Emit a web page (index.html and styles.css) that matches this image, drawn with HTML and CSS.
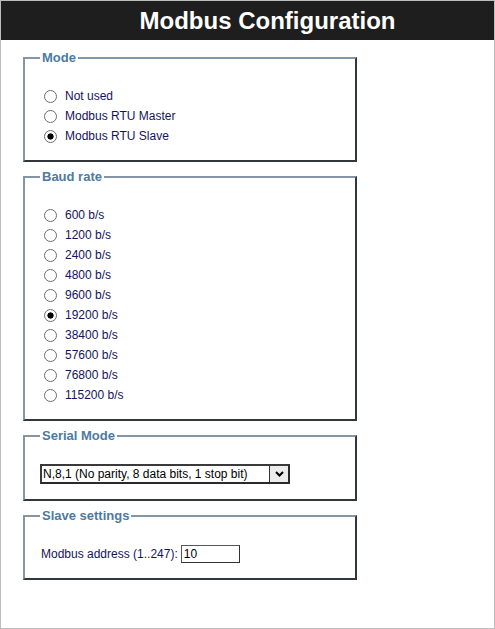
FILE: index.html
```html
<!DOCTYPE html>
<html>
<head>
<meta charset="utf-8">
<title>Modbus Configuration</title>
<link rel="stylesheet" href="styles.css">
</head>
<body>
<div class="page">
  <header class="header"><h1 class="title">Modbus Configuration</h1></header>
  <main class="content">
    <fieldset class="group">
      <legend class="legend">Mode</legend>
      <label class="opt"><input class="radio" type="radio" name="mode">Not used</label>
      <label class="opt"><input class="radio" type="radio" name="mode">Modbus RTU Master</label>
      <label class="opt"><input class="radio" type="radio" name="mode" checked>Modbus RTU Slave</label>
    </fieldset>
    <fieldset class="group">
      <legend class="legend">Baud rate</legend>
      <label class="opt"><input class="radio" type="radio" name="baud">600 b/s</label>
      <label class="opt"><input class="radio" type="radio" name="baud">1200 b/s</label>
      <label class="opt"><input class="radio" type="radio" name="baud">2400 b/s</label>
      <label class="opt"><input class="radio" type="radio" name="baud">4800 b/s</label>
      <label class="opt"><input class="radio" type="radio" name="baud">9600 b/s</label>
      <label class="opt"><input class="radio" type="radio" name="baud" checked>19200 b/s</label>
      <label class="opt"><input class="radio" type="radio" name="baud">38400 b/s</label>
      <label class="opt"><input class="radio" type="radio" name="baud">57600 b/s</label>
      <label class="opt"><input class="radio" type="radio" name="baud">76800 b/s</label>
      <label class="opt"><input class="radio" type="radio" name="baud">115200 b/s</label>
    </fieldset>
    <fieldset class="group group-serial">
      <legend class="legend">Serial Mode</legend>
      <div class="select-wrap">
        <select class="select">
          <option>N,8,1 (No parity, 8 data bits, 1 stop bit)</option>
          <option>E,8,1 (Even parity, 8 data bits, 1 stop bit)</option>
          <option>O,8,1 (Odd parity, 8 data bits, 1 stop bit)</option>
          <option>N,8,2 (No parity, 8 data bits, 2 stop bits)</option>
        </select>
        <span class="select-btn"><svg width="9" height="6" viewBox="0 0 9 6"><path d="M1 1 L4.5 4.5 L8 1" fill="none" stroke="#000" stroke-width="2"/></svg></span>
      </div>
    </fieldset>
    <fieldset class="group group-slave">
      <legend class="legend">Slave settings</legend>
      <div class="field">Modbus address (1..247):<input class="text" type="text" value="10"></div>
    </fieldset>
  </main>
</div>
</body>
</html>
```
FILE: styles.css
```css
html, body {
  margin: 0;
  padding: 0;
  background: #fff;
}
.page {
  box-sizing: border-box;
  width: 495px;
  height: 629px;
  border: 1px solid #bdbdbd;
  font-family: "Liberation Sans", Arial, sans-serif;
  font-size: 12px;
  color: #14145e;
}
.header {
  background: #1e1e1e;
  height: 39px;
  display: flex;
  align-items: center;
  justify-content: center;
  padding-left: 40px;
}
.title {
  margin: 0;
  color: #fff;
  font-size: 24px;
  font-weight: bold;
  line-height: 28px;
}
.content {
  padding: 10px 0 0 22px;
}
.group {
  box-sizing: border-box;
  width: 334px;
  margin: 0 0 7px 0;
  padding: 21px 15px 14px 15px;
  border-style: solid;
  border-width: 2px;
  border-color: #8595a3 #31373d #31373d #8595a3;
  min-width: 0;
}
.group-serial {
  padding-bottom: 15px;
}
.group-slave {
  padding-bottom: 14px;
}
.legend {
  padding: 0 2px;
  font-size: 13px;
  font-weight: bold;
  line-height: 15px;
  color: #4b7ba3;
}
.opt {
  display: flex;
  align-items: center;
  height: 20px;
  line-height: 20px;
}
.radio {
  appearance: none;
  -webkit-appearance: none;
  box-sizing: border-box;
  width: 13px;
  height: 13px;
  margin: 0 8px 0 4px;
  border: 1px solid #6e6e6e;
  border-radius: 50%;
  background: #fff;
}
.radio:checked {
  background: radial-gradient(circle, #000 0, #000 2.8px, #fff 3.4px);
}
.select-wrap {
  position: relative;
  width: 250px;
  height: 20px;
}
.select {
  appearance: none;
  -webkit-appearance: none;
  box-sizing: border-box;
  width: 250px;
  height: 20px;
  margin: 0;
  padding: 0 0 0 1px;
  border: 2px solid #333;
  border-color: #3a3a3a #2a2a2a #2a2a2a #3a3a3a;
  border-radius: 0;
  background: #fff;
  font-family: "Liberation Sans", Arial, sans-serif;
  font-size: 12px;
  color: #000;
}
.select-btn {
  position: absolute;
  top: 2px;
  right: 2px;
  width: 19px;
  height: 16px;
  box-sizing: border-box;
  border-left: 1px solid #333;
  background: #ececec;
  display: flex;
  align-items: center;
  justify-content: center;
  pointer-events: none;
}
.field {
  display: flex;
  align-items: center;
  height: 20px;
  padding-left: 1px;
}
.text {
  box-sizing: border-box;
  width: 59px;
  height: 18px;
  margin: 0 0 0 3px;
  padding: 0 2px;
  border: 1px solid #333;
  border-color: #555 #333 #333 #555;
  font-family: "Liberation Sans", Arial, sans-serif;
  font-size: 12px;
  color: #000;
  outline: none;
}
```
